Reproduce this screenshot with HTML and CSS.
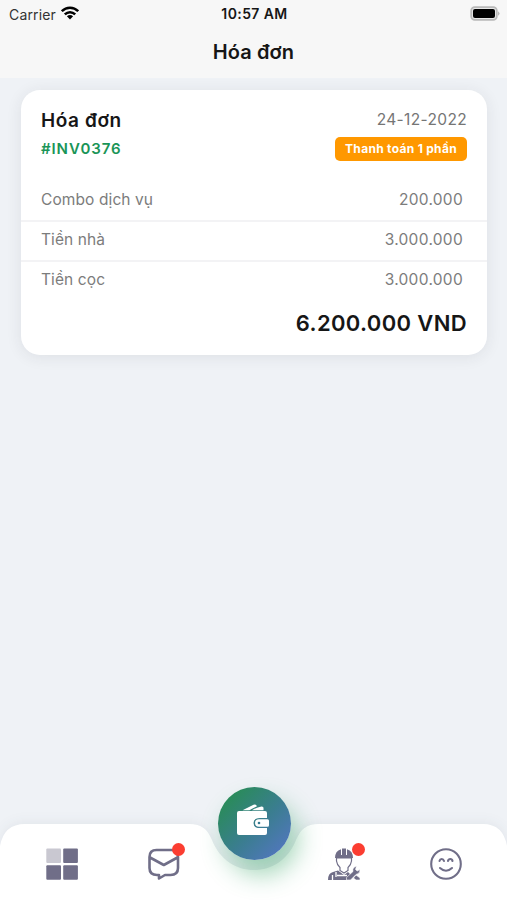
FILE: index.html
```html
<!DOCTYPE html>
<html lang="vi">
<head>
<meta charset="utf-8">
<meta name="viewport" content="width=device-width, initial-scale=1">
<title>Hóa đơn</title>
<link rel="stylesheet" href="styles.css">
</head>
<body>
<div class="app">
  <header class="header">
    <div class="status">
      <div class="carrier"><span class="carrier-name">Carrier</span>
        <svg class="wifi" viewBox="0 0 18 14"><g fill="none" stroke="#000" stroke-width="2.500"><path d="M.8 5.200C5.400.5 12.600.5 17.200 5.200"/><path d="M3.800 8.300C6.800 5.400 11.200 5.400 14.200 8.300"/></g><path d="M5.900 10.300Q9 7.700 12.100 10.300L9 13.500Z"/></svg>
      </div>
      <div class="time">10:57 AM</div>
      <svg class="battery" viewBox="0 0 30 15"><rect x="1.200" y="1.200" width="25.600" height="12.600" rx="3.600" fill="#e8e8e8" stroke="#b9b9b9" stroke-width="1.800"/><rect x="3" y="3" width="22" height="9" rx="2"/><path d="M28.200 5.200q2.500 2.300 0 4.600z" fill="#aaa"/></svg>
    </div>
    <h1 class="title">Hóa đơn</h1>
  </header>
  <main class="content">
    <article class="card">
      <div class="card-head">
        <div class="head-left">
          <h2 class="name">Hóa đơn</h2>
          <div class="code">#INV0376</div>
        </div>
        <div class="head-right">
          <div class="date">24-12-2022</div>
          <div class="tag"><span class="tag-text">Thanh toán 1 phần</span></div>
        </div>
      </div>
      <div class="row"><span class="label">Combo dịch vụ</span><span class="amount">200.000</span></div>
      <div class="row"><span class="label">Tiền nhà</span><span class="amount">3.000.000</span></div>
      <div class="row"><span class="label">Tiền cọc</span><span class="amount">3.000.000</span></div>
      <div class="total"><span class="total-text">6.200.000 VND</span></div>
    </article>
  </main>
  <nav class="tabs">
    <svg class="tabs-bg" viewBox="0 0 507 76"><path d="M0 76V22Q4 0 25 0H189C202 0 207 5 212 16C220 36 236 46 254 46S288 36 296 16C301 5 306 0 319 0H483Q503 0 507 22V76Z" fill="#fff"/></svg>
    <a class="tab"><svg class="icon" viewBox="0 0 32 32"><g fill="#706e88"><rect x=".3" y=".6" width="14.700" height="14.500" rx="1" fill="#c9c8d1"/><rect x="17.200" y=".6" width="14.700" height="14.500" rx="1"/><rect x=".3" y="17.200" width="14.700" height="14.500" rx="1"/><rect x="17.200" y="17.200" width="14.700" height="14.500" rx="1"/></g></svg></a>
    <a class="tab"><svg class="icon" viewBox="0 0 32 32"><path d="M8.500 2H23.500Q30 2 30 9V20Q30 27 22.500 27H17L11 30.500V27H9Q1.500 27 1.500 20V9Q1.500 2 8.500 2ZM2 9.500L15.800 17L29.500 9.500" fill="none" stroke="#706e88" stroke-width="2.600" stroke-linejoin="round"/></svg><i class="dot"></i></a>
    <a class="fab"><svg class="wallet" viewBox="0 0 34 32"><g fill="#fff"><path d="M6.500 6.200L17.500 .8Q19.500 0 20.300 1.200L21 2.200L16 4.700L13.500 6.200Z"/><path d="M16 6.200Q21 3.200 25.500 2.400Q27.500 2.200 27.500 4V6.200Z"/><path d="M3 7H29Q31 7 31 9V14H24Q17.500 14 17.500 19T24 24H31V29Q31 31 29 31H3Q1 31 1 29V9Q1 7 3 7Z"/><path d="M23 15.300H31.500Q33 15.300 33 16.800V21.200Q33 22.700 31.500 22.700H23Q19 22.700 19 19T23 15.300Z"/></g><circle cx="23" cy="19" r="1.300" fill="#357b91"/></svg></a>
    <a class="tab"><svg class="icon" viewBox="0 0 32 32"><g fill="#706e88"><path d="M7 10Q7 3 13 1.200V7H14V.5H18V7H19V1.200Q25 3 25 10Z"/><path d="M0 32Q0 25 5 24L10 22.500L16 27L20 24L22 26V32Z"/></g><path d="M8.500 10V13Q9 17 12 19.500V22.500L16 25L20 22.500V19.500Q23 17 23.500 13V10Z" fill="#fff" stroke="#706e88" stroke-width="1.200"/><path d="M4.500 27V32M9 27.500H19M8 24V29" stroke="#fff" stroke-width="1.300"/><path d="M28.500 18Q24 19.500 25 23.500L18.500 29.500V32H22.500L28 26.500Q32 26 32 21.500L29.200 23L27.500 21.500ZM28 27L32 30V32H28L25.500 30Z" fill="#706e88" stroke="#fff" stroke-width=".6"/></svg><i class="dot"></i></a>
    <a class="tab"><svg class="icon" viewBox="0 0 32 32"><g fill="none" stroke="#706e88" stroke-width="2.100" stroke-linecap="round"><circle cx="16" cy="16" r="14.800"/><path d="M9.500 13Q10 11 11.700 11T14 13M18 13Q18.500 11 20.300 11T22.500 13M10 20Q16 25.500 22 20"/></g></svg></a>
  </nav>
</div>
</body>
</html>
```
FILE: styles.css
```css
* { box-sizing: border-box; }
body { margin: 0; font-family: Inter, "Open Sans", sans-serif; background: #eff2f6; color: #161616; }
.app { height: 900px; display: flex; flex-direction: column; overflow: hidden; }
.header { height: 78px; background: #f7f7f7; flex: none; }
.status { height: 28px; display: grid; grid-template-columns: 1fr auto 1fr; align-items: center; padding: 0 7px 0 9px; }
.carrier { display: flex; align-items: center; gap: 5px; font-size: 14px; letter-spacing: .15px; color: #333; }
.wifi { width: 18px; height: 14px; margin-top: -2px; }
.time { font-size: 14px; font-weight: 600; letter-spacing: .4px; margin-top: -1px; }
.battery { width: 30px; height: 15px; margin-top: -2px; justify-self: end; }
.title { margin: 10px 0 0; font-size: 20px; line-height: 29px; font-weight: 600; letter-spacing: .1px; text-align: center; }
.content { flex: 1; padding: 12px 20px 0 21px; }
.card { height: 265px; border-radius: 19px; background: #fff; box-shadow: 0 2px 16px rgba(40, 45, 60, .09); }
.card-head { height: 90px; padding: 18px 20px 0; display: flex; justify-content: space-between; }
.name { margin: 0; font-size: 19px; line-height: 26px; font-weight: 600; letter-spacing: .6px; }
.code { margin-top: 5px; font-size: 15px; line-height: 20px; font-weight: 600; letter-spacing: .9px; color: #1a9557; }
.head-right { display: flex; flex-direction: column; align-items: flex-end; }
.date { font-size: 15.500px; line-height: 24px; letter-spacing: .35px; color: #757575; }
.tag { margin-top: 5px; width: 132px; height: 24px; border-radius: 5px; background: #ff9800; color: #fff; font-size: 12px; line-height: 24px; font-weight: 700; letter-spacing: .3px; text-align: center; white-space: nowrap; }
.row { height: 40.300px; padding: 0 24px 0 20px; display: flex; align-items: center; justify-content: space-between; font-size: 15.500px; letter-spacing: .1px; color: #7c7c7c; }
.row:nth-child(2) { height: 39.500px; }
.row + .row { border-top: 2px solid #f3f3f5; padding-bottom: 2px; }
.amount { letter-spacing: .3px; }
.total { padding: 8px 20px 0; font-size: 22px; line-height: 30px; font-weight: 600; letter-spacing: .35px; text-align: right; }
.tabs { position: relative; height: 76px; flex: none; display: grid; grid-template-columns: 124px 80px 100px 80px 123px; }
.tabs-bg { position: absolute; inset: 0; width: 507px; height: 76px; filter: drop-shadow(0 -2px 6px rgba(40, 45, 60, .06)); }
.tab { position: relative; display: flex; justify-content: center; align-items: flex-start; padding-top: 24px; }
.icon { width: 32px; height: 32px; }
.dot { position: absolute; left: 48px; top: 19px; width: 13px; height: 13px; border-radius: 50%; background: #fb3d31; }
.fab { position: relative; justify-self: center; width: 73px; height: 73px; margin-top: -37px; border-radius: 50%; background: linear-gradient(135deg, #2a8b5b 15%, #3b7d91 55%, #5875ca); display: flex; align-items: center; justify-content: center; box-shadow: 7px 15px 24px rgba(35, 155, 85, .42); }
.wallet { width: 34px; height: 32px; margin: -7px 0 0 -2px; }
```
